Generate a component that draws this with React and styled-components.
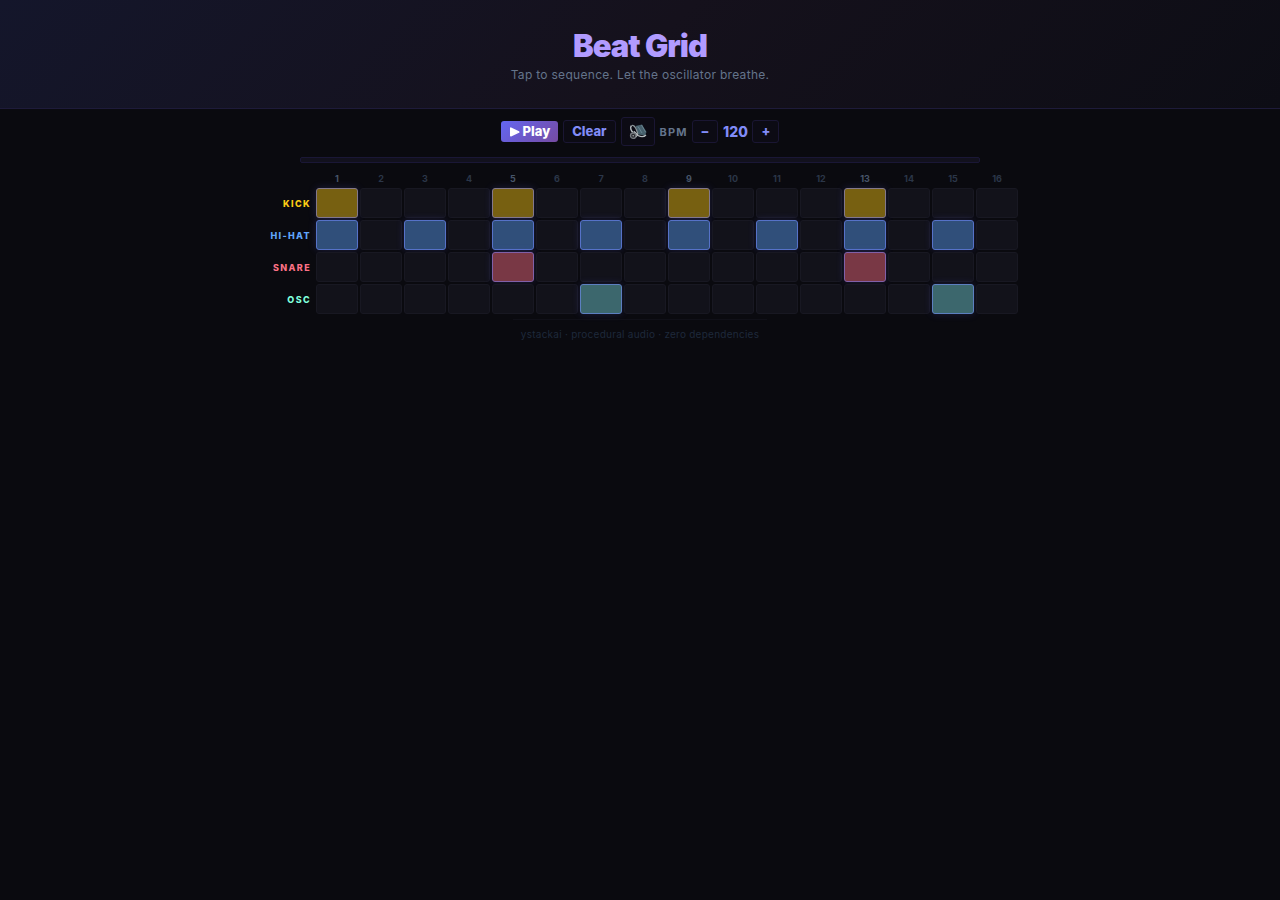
import React, { useState } from "react";
import styled, { createGlobalStyle, css } from "styled-components";

const GlobalStyle = createGlobalStyle`
  *, *::before, *::after { box-sizing: border-box; }
  body {
    margin: 0;
    min-height: 100vh;
    background: #0a0a0f;
    color: #e2e8f0;
    font-family: Inter, "Liberation Sans", sans-serif;
  }
`;

const Page = styled.div`
  display: flex;
  flex-direction: column;
  align-items: center;
`;

const Header = styled.header`
  width: 100%;
  padding: 24px 16px;
  text-align: center;
  background: linear-gradient(135deg, #14162b 0%, #15111c 50%, #0d0d15 100%);
  border-bottom: 1px solid #1e1b3a;
`;

const Title = styled.h1`
  margin: 0;
  font-size: 31px;
  line-height: 43px;
  font-weight: 900;
  letter-spacing: -1px;
  color: #b19bff;
`;

const Tagline = styled.p`
  margin: 0 0 1px;
  font-size: 12px;
  line-height: 16px;
  letter-spacing: 0.025em;
  color: #64748b;
`;

const Toolbar = styled.div`
  display: flex;
  align-items: center;
  justify-content: center;
  gap: 5px;
  padding: 8px 16px 11px;
`;

const Button = styled.button`
  padding: 2px 8px;
  border: 1px solid #1a1633;
  border-radius: 3px;
  background: #0c0b14;
  color: #818cf8;
  font: 800 13px/17px Inter, "Liberation Sans", sans-serif;
  cursor: pointer;
  ${(p) => p.$primary && css`
    display: flex;
    align-items: center;
    gap: 3px;
    border: 0;
    color: #fff;
    background: linear-gradient(135deg, #6366f1, #764ba2);
  `}
  ${(p) => p.$icon && css`
    display: flex;
    padding: 5px 7px;
  `}
`;

const Tempo = styled.div`
  display: flex;
  align-items: center;
  gap: 4px;
`;

const TempoLabel = styled.span`
  font-size: 11px;
  font-weight: 700;
  letter-spacing: 0.1em;
  color: #64748b;
`;

const TempoValue = styled.output`
  min-width: 26px;
  text-align: center;
  font-size: 14px;
  font-weight: 800;
  color: #818cf8;
`;

const Progress = styled.div`
  width: 100%;
  max-width: 680px;
  height: 6px;
  border: 1px solid #1a1736;
  border-radius: 2px;
  background: #12111d;
`;

const Grid = styled.div`
  display: grid;
  grid-template-columns: 52px repeat(16, 42px);
  gap: 2px;
  margin-top: 9px;
`;

const StepNumber = styled.span`
  height: 14px;
  font-size: 9px;
  line-height: 13px;
  font-weight: 700;
  text-align: center;
  color: ${(p) => (p.$beat ? "#475569" : "#2b3648")};
`;

const TrackName = styled.span`
  padding: 2px 3px 0 0;
  font-size: 9px;
  line-height: 28px;
  font-weight: 800;
  letter-spacing: 0.15em;
  text-align: right;
  color: ${(p) => p.$color};
`;

const Cell = styled.button`
  height: 30px;
  padding: 0;
  border: 1px solid #181822;
  border-radius: 3px;
  background: #12121a;
  cursor: pointer;
  ${(p) => p.$on && css`
    border-color: ${p.$edge};
    background: ${p.$fill};
    box-shadow: 0 0 8px rgba(99, 102, 241, 0.2);
  `}
`;

const Footer = styled.footer`
  margin-top: 5px;
  padding: 8px;
  border-top: 1px solid #101018;
  font-size: 10px;
  line-height: 13px;
  letter-spacing: 0.025em;
  color: #1e293b;
`;

const TRACKS = [
  { name: "KICK", color: "#facc15", fill: "#776011", edge: "#83788b", steps: [0, 4, 8, 12] },
  { name: "HI-HAT", color: "#60a5fa", fill: "#304f7a", edge: "#5672c8", steps: [0, 2, 4, 6, 8, 10, 12, 14] },
  { name: "SNARE", color: "#fb7185", fill: "#793845", edge: "#8060a8", steps: [4, 12] },
  { name: "OSC", color: "#7fffdc", fill: "#3c676d", edge: "#5c7fc0", steps: [6, 14] },
];
const STEPS = Array.from({ length: 16 }, (_, i) => i);

const PlayIcon = () => (
  <svg width="11" height="10" viewBox="0 0 11 10" aria-hidden="true">
    <path d="M1.8 1.2v7.6L9.7 5z" fill="currentColor" stroke="currentColor" strokeWidth="1.6" strokeLinejoin="round" />
  </svg>
);

const SpeakerIcon = () => (
  <svg width="18" height="17" viewBox="0 0 18 17" fill="none" aria-hidden="true">
    <path d="M6.5 3 13 1.5l4.5 7.5-1.5 3.5-6.5-1z" fill="#46606c" />
    <path d="M9 3.5 13 10M12.5 2l4 7" stroke="#708d98" strokeWidth=".8" />
    <path d="M2.5 2.5C.8 4.5 1.8 8 4.5 9.5" stroke="#b5bcbf" strokeWidth="1.4" />
    <path d="M3 2.5C6 1.5 8 8 9 11.5" stroke="#8e989c" strokeWidth="1.2" />
    <path d="M9 12.5c3 1.5 6 1.5 8-.5" stroke="#b5bcbf" strokeWidth="1.3" />
    <path d="M5 8.5 8.5 12 6 14.5" stroke="#c9cdcf" strokeWidth="1.4" />
    <circle cx="4.2" cy="12.7" r="2.7" fill="#292a30" stroke="#74787d" strokeWidth="1.3" />
    <circle cx="4.2" cy="12.7" r=".8" fill="#a7a9aa" />
  </svg>
);

export default function App() {
  const [pattern, setPattern] = useState(() =>
    TRACKS.map((t) => STEPS.map((s) => t.steps.includes(s)))
  );
  const [bpm, setBpm] = useState(120);
  const [playing, setPlaying] = useState(false);
  const toggle = (row, step) =>
    setPattern((p) => p.map((r, i) => (i === row ? r.map((v, j) => (j === step ? !v : v)) : r)));

  return (
    <Page>
      <GlobalStyle />
      <Header>
        <Title>Beat Grid</Title>
        <Tagline>Tap to sequence. Let the oscillator breathe.</Tagline>
      </Header>
      <Toolbar>
        <Button $primary onClick={() => setPlaying(!playing)}>
          <PlayIcon />
          {playing ? "Stop" : "Play"}
        </Button>
        <Button onClick={() => setPattern(TRACKS.map(() => STEPS.map(() => false)))}>Clear</Button>
        <Button $icon aria-label="Sound"><SpeakerIcon /></Button>
        <Tempo>
          <TempoLabel>BPM</TempoLabel>
          <Button aria-label="Slower" onClick={() => setBpm(bpm - 5)}>−</Button>
          <TempoValue>{bpm}</TempoValue>
          <Button aria-label="Faster" onClick={() => setBpm(bpm + 5)}>+</Button>
        </Tempo>
      </Toolbar>
      <Progress />
      <Grid>
        <span />
        {STEPS.map((s) => (
          <StepNumber key={s} $beat={s % 4 === 0}>{s + 1}</StepNumber>
        ))}
        {TRACKS.map((t, row) => (
          <React.Fragment key={t.name}>
            <TrackName $color={t.color}>{t.name}</TrackName>
            {STEPS.map((s) => (
              <Cell
                key={s}
                $on={pattern[row][s]}
                $fill={t.fill}
                $edge={t.edge}
                aria-label={`${t.name} step ${s + 1}`}
                aria-pressed={pattern[row][s]}
                onClick={() => toggle(row, s)}
              />
            ))}
          </React.Fragment>
        ))}
      </Grid>
      <Footer>ystackai · procedural audio · zero dependencies</Footer>
    </Page>
  );
}
